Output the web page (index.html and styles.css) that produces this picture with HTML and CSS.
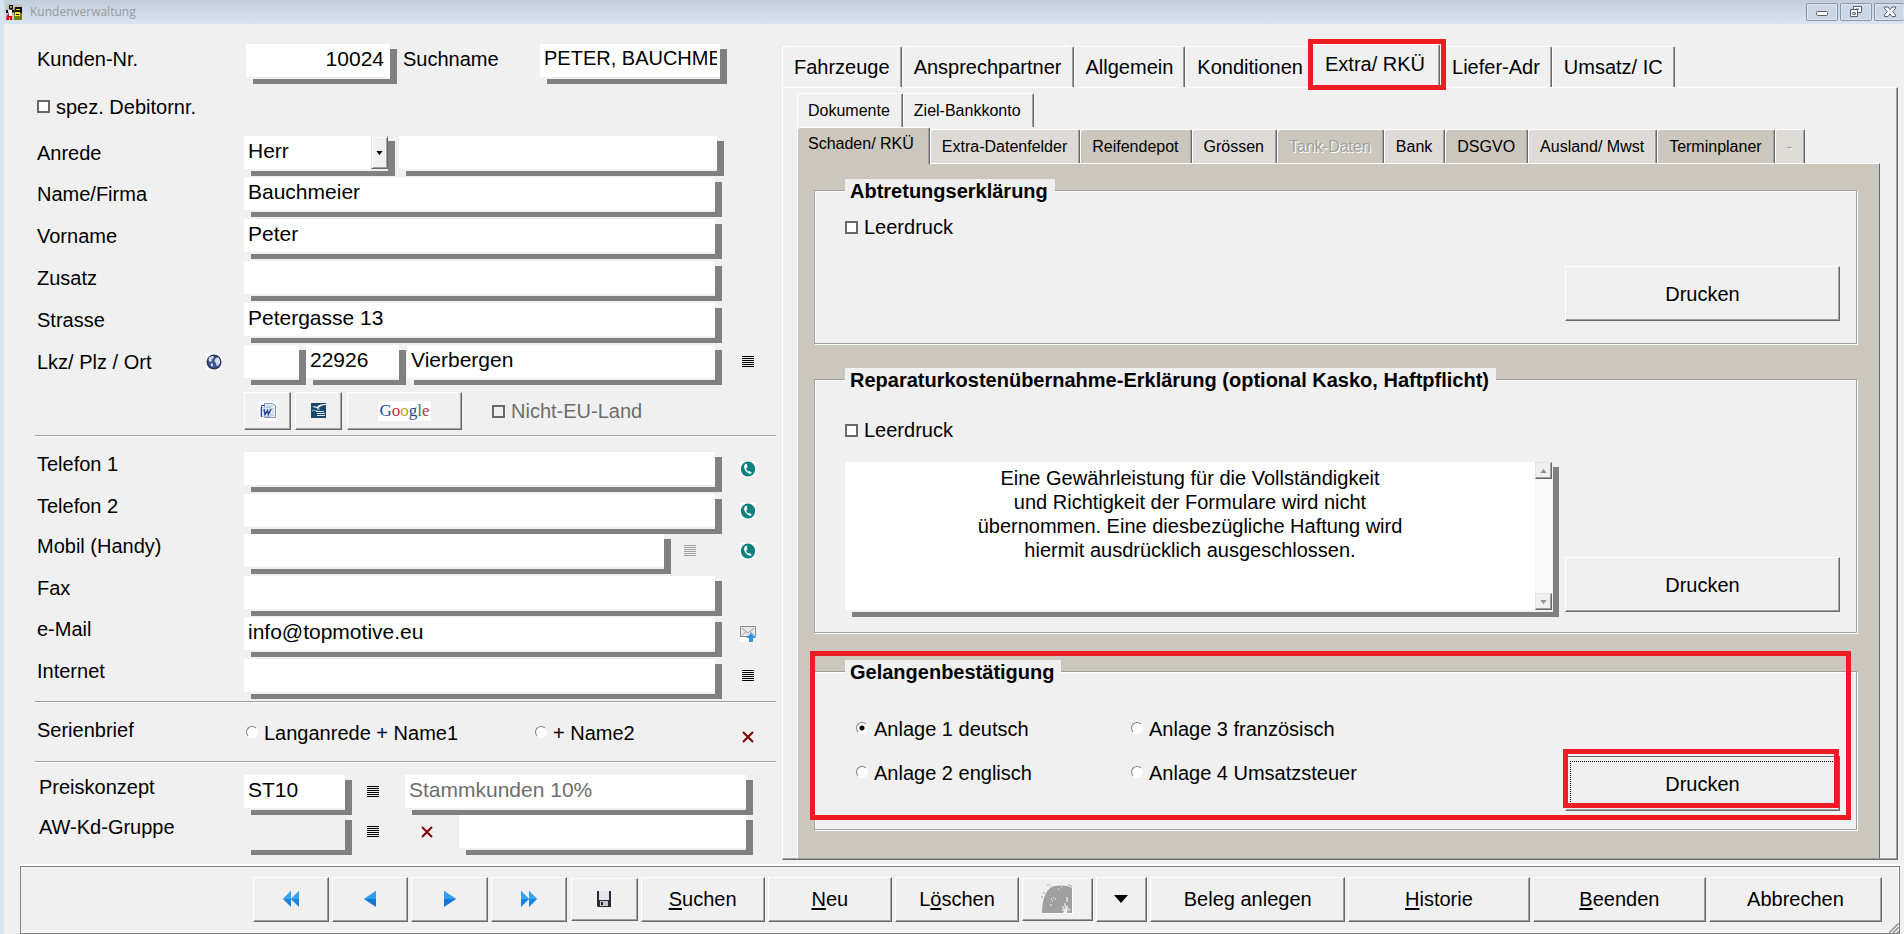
FILE: index.html
```html
<!DOCTYPE html>
<html lang="de">
<head>
<meta charset="utf-8">
<title>Kundenverwaltung</title>
<link rel="stylesheet" href="styles.css">
</head>
<body>
<svg class="defs" aria-hidden="true">
  <symbol id="i-list" viewBox="0 0 12 12"><path d="M0 0h12v1H0zM0 2h12v1H0zM0 4h12v1H0zM0 6h12v1H0zM0 8h12v1H0zM0 10h12v1H0z" fill="currentColor" shape-rendering="crispEdges"/></symbol>
  <symbol id="i-phone" viewBox="0 0 16 16"><rect width="16" height="16" fill="#fff"/><ellipse cx="8" cy="8" rx="7.200" ry="7.400" fill="#0b827f"/><path d="M5 3.200c-2 2.500-.5 7.500 4.500 9.600 1 .3 1.900-.3 2.200-1.200l-2.200-1.700-1.300.7C6.900 9.600 6.300 8.200 6.300 6.900l1.200-.7-.6-2.900c-.5-.6-1.400-.6-1.900-.1z" fill="#fff"/></symbol>
  <symbol id="i-x" viewBox="0 0 12 12"><path d="M1 1l10 10M11 1L1 11" stroke="#800000" stroke-width="2"/></symbol>
</svg>
<div class="window">
  <header class="titlebar">
    <svg class="app-icon" viewBox="0 0 16 16"><rect width="16" height="16" fill="#c4c4c4"/><path d="M8 9h8v7H8z" fill="#808000"/><path d="M9 3h7v6H8z" fill="#111"/><path d="M10 5h4v1h-4zM9 8h5v4H9z" fill="#ffea20"/><path d="M10 10h3v1h-3z" fill="#111"/><path d="M3 1h4v4H3z" fill="#111"/><path d="M4 2h2v2H4z" fill="#ada500"/><path d="M0 6h3l2-1 3 1v2L6 9v4H2V9H0z" fill="#111"/><path d="M2 6h4v6H3z" fill="#fff"/><path d="M1 11h2v5H0zM4 12h2v4H4z" fill="#e00000"/></svg>
    <h1>Kundenverwaltung</h1>
    <div class="win-buttons">
      <button aria-label="Minimieren"><svg viewBox="0 0 14 14"><rect x="1.500" y="6.500" width="11" height="4" rx="1" fill="#fff" stroke="#586070"/></svg></button>
      <button aria-label="Wiederherstellen"><svg viewBox="0 0 14 14" fill="#fff" stroke="#586070"><path d="M4.500 1.500h8v6h-8z"/><path d="M7 4h3"/><path d="M1.500 4.500h7v7h-7z"/><path d="M3.800 7.500h2.500v2H3.800z"/></svg></button>
      <button aria-label="Schließen"><svg viewBox="0 0 14 14"><path d="M1.500 2h3.500l2 2.400L9 2h3.500v1.500L9.700 6.500l2.800 3.500v1.500H9L7 9l-2 2.500H1.500V10l2.800-3.500L1.500 3.500z" fill="#fff" stroke="#586070"/></svg></button>
    </div>
  </header>

  <main class="content">
    <form class="customer">
      <div class="row gap-0">
        <label class="caption" for="nr">Kunden-Nr.</label>
        <input class="field w-nr" id="nr" value="10024">
        <label class="suchname" for="such">Suchname</label>
        <input class="field grow name-key" id="such" value="PETER, BAUCHMEIER">
        <span class="tail tail-s"></span>
      </div>
      <div class="row gap-l">
        <label class="check"><input type="checkbox">spez. Debitornr.</label>
      </div>
      <div class="row gap-l">
        <label class="caption" for="anrede">Anrede</label>
        <span class="combo"><select class="field" id="anrede"><option>Herr</option></select><span class="combo-arrow"><svg viewBox="0 0 8 5"><path d="M0 0h8L4 5z"/></svg></span></span>
        <input class="field grow" aria-label="Anredezusatz">
        <span class="tail tail-m"></span>
      </div>
      <div class="row gap-n">
        <label class="caption" for="name">Name/Firma</label>
        <input class="field grow" id="name" value="Bauchmeier"><span class="tail"></span>
      </div>
      <div class="row">
        <label class="caption" for="vorname">Vorname</label>
        <input class="field grow" id="vorname" value="Peter"><span class="tail"></span>
      </div>
      <div class="row">
        <label class="caption" for="zusatz">Zusatz</label>
        <input class="field grow" id="zusatz"><span class="tail"></span>
      </div>
      <div class="row">
        <label class="caption" for="strasse">Strasse</label>
        <input class="field grow" id="strasse" value="Petergasse 13"><span class="tail"></span>
      </div>
      <div class="row">
        <span class="caption split"><label for="ort">Lkz/ Plz / Ort</label>
          <svg class="icon16" viewBox="0 0 16 16"><rect width="16" height="16" fill="#fff"/><circle cx="8" cy="8" r="7.500" fill="#25335f"/><circle cx="8" cy="8" r="6" fill="#415591"/><path d="M3 3.500l3-1.500 2 .5-1 2-1.500 1L6 7l-2 1-1.500-2zM9 5l3-2 2 3 0 3-2 3-1.500-.5L10 9 8.500 7.500zM5 9l2 1-.5 3L5 12z" fill="#d5def0"/></svg></span>
        <input class="field w-lkz" aria-label="Lkz">
        <input class="field w-plz" aria-label="Plz" value="22926">
        <input class="field grow" id="ort" value="Vierbergen">
        <span class="tail"><svg class="icon12"><use href="#i-list"/></svg></span>
      </div>
      <div class="row tools">
        <span class="caption"></span>
        <button type="button" class="bevel t-sq" aria-label="Word"><svg viewBox="0 0 18 20"><rect width="18" height="20" fill="#fff"/><path d="M5.500 2.500h8l3 2v12h-11z" fill="#eef3fb" stroke="#7d93bd"/><path d="M7 5h7M12 8h3M13 11h2M9 14h6" stroke="#9fb2d6"/><path d="M1.500 6.500h10v9h-10z" fill="#dfe8f7" stroke="#b9c7e0"/><path d="M2.500 16V4.500h3" fill="none" stroke="#27488f"/><path d="M5 8l1 5.500 2.500-4 .8 4L12 8" fill="none" stroke="#27488f" stroke-width="1.500"/></svg></button>
        <button type="button" class="bevel t-sq" aria-label="Writer"><svg viewBox="0 0 18 20"><path d="M1 2h15v15H1z" fill="#1c4668"/><path d="M2 6c2-1 3-1 5 0 1-2 4-3 9-3v1c-4 0-6 1-8 4-1-1-3-2-6-2z" fill="#fff"/><path d="M2 10c2-1 3-1 4 0 1-1 2-2 4-2" fill="none" stroke="#9dc0da"/><path d="M6 10.500h8M7 12.500h8M7 14.500h8" stroke="#d8e6f0"/></svg></button>
        <button type="button" class="bevel t-google" aria-label="Google Maps"><span class="google"><b class="g1">G</b><b class="g2">o</b><b class="g3">o</b><b class="g1">g</b><b class="g4">l</b><b class="g2">e</b></span></button>
        <label class="check dim"><input type="checkbox">Nicht-EU-Land</label>
      </div>
      <hr>
      <div class="lower">
      <div class="row first">
        <label class="caption" for="tel1">Telefon 1</label>
        <input class="field grow" id="tel1"><span class="tail"><svg class="icon16"><use href="#i-phone"/></svg></span>
      </div>
      <div class="row">
        <label class="caption" for="tel2">Telefon 2</label>
        <input class="field grow" id="tel2"><span class="tail"><svg class="icon16"><use href="#i-phone"/></svg></span>
      </div>
      <div class="row gap-s">
        <label class="caption" for="mobil">Mobil (Handy)</label>
        <input class="field grow" id="mobil"><span class="mid"><svg class="icon12 faded"><use href="#i-list"/></svg></span><span class="tail tail-p"><svg class="icon16"><use href="#i-phone"/></svg></span>
      </div>
      <div class="row">
        <label class="caption" for="fax">Fax</label>
        <input class="field grow" id="fax"><span class="tail"></span>
      </div>
      <div class="row gap-n">
        <label class="caption" for="mail">e-Mail</label>
        <input class="field grow" id="mail" value="info@topmotive.eu"><span class="tail"><svg class="icon16" viewBox="0 0 16 16"><rect width="16" height="16" fill="#fff"/><path d="M.5.500h15v10H.5z" fill="#e8e8e8" stroke="#8a8a8a"/><path d="M2 2l6 5 6-5M2 9.500l4-4M14 9.500l-4-4" fill="none" stroke="#999"/><path d="M11 7l5 5h-3v4H9v-4H6z" fill="#2c93ee"/></svg></span>
      </div>
      <div class="row">
        <label class="caption" for="web">Internet</label>
        <input class="field grow" id="web"><span class="tail"><svg class="icon12"><use href="#i-list"/></svg></span>
      </div>
      </div>
      <hr class="after-fields">
      <div class="serien">
        <span class="caption">Serienbrief</span>
        <label class="radio r-first"><input type="radio" name="serie">Langanrede + Name1</label>
        <label class="radio"><input type="radio" name="serie">+ Name2</label>
        <span class="tail push"><svg class="icon12"><use href="#i-x"/></svg></span>
      </div>
      <hr>
      <div class="lower prices">
      <div class="row gap-m">
        <label class="caption" for="preis">Preiskonzept</label>
        <input class="field w-code" id="preis" value="ST10">
        <span class="pick"><svg class="icon12"><use href="#i-list"/></svg></span>
        <input class="field grow muted" aria-label="Preiskonzept Bezeichnung" value="Stammkunden 10%"><span class="tail tail-xs"></span>
      </div>
      <div class="row gap-s">
        <label class="caption" for="aw">AW-Kd-Gruppe</label>
        <input class="field w-code grey" id="aw">
        <span class="pick"><svg class="icon12"><use href="#i-list"/></svg></span>
        <span class="clear"><svg class="icon12"><use href="#i-x"/></svg></span>
        <input class="field grow" aria-label="AW-Kd-Gruppe Bezeichnung"><span class="tail tail-xs"></span>
      </div>
      </div>
    </form>

    <section class="details">
      <nav class="tabs">
        <button class="tab">Fahrzeuge</button><button class="tab">Ansprechpartner</button><button class="tab">Allgemein</button><button class="tab">Konditionen</button><button class="tab active overlap">Extra/ RKÜ<span class="mark mark-tab"></span></button><button class="tab">Liefer-Adr</button><button class="tab">Umsatz/ IC</button>
      </nav>
      <div class="panel">
        <nav class="tabs small">
          <button class="tab">Dokumente</button><button class="tab">Ziel-Bankkonto</button>
        </nav>
        <nav class="tabs small second">
          <button class="tab dark active">Schaden/ RKÜ</button><button class="tab light">Extra-Datenfelder</button><button class="tab dark">Reifendepot</button><button class="tab light">Grössen</button><button class="tab dark" disabled>Tank-Daten</button><button class="tab light">Bank</button><button class="tab dark">DSGVO</button><button class="tab light">Ausland/ Mwst</button><button class="tab dark">Terminplaner</button><button class="tab light" disabled>-</button>
        </nav>
        <div class="subpanel">
          <fieldset class="g1st">
            <legend>Abtretungserklärung</legend>
            <label class="check"><input type="checkbox">Leerdruck</label>
            <button class="bevel print">Drucken</button>
          </fieldset>
          <fieldset class="g2nd">
            <legend>Reparaturkostenübernahme-Erklärung (optional Kasko, Haftpflicht)</legend>
            <label class="check"><input type="checkbox">Leerdruck</label>
            <div class="memo-row">
              <div class="memo">
                <textarea aria-label="Hinweis">Eine Gewährleistung für die Vollständigkeit
und Richtigkeit der Formulare wird nicht
übernommen. Eine diesbezügliche Haftung wird
hiermit ausdrücklich ausgeschlossen.</textarea>
                <div class="scroll"><button class="bevel" aria-label="Nach oben"><svg viewBox="0 0 8 5"><path d="M0 5h8L4 0z"/></svg></button><button class="bevel" aria-label="Nach unten"><svg viewBox="0 0 8 5"><path d="M0 0h8L4 5z"/></svg></button></div>
              </div>
              <button class="bevel print">Drucken</button>
            </div>
          </fieldset>
          <fieldset class="g3rd">
            <legend>Gelangenbestätigung</legend>
            <div class="options">
              <label class="radio"><input type="radio" name="anlage" checked>Anlage 1 deutsch</label>
              <label class="radio"><input type="radio" name="anlage">Anlage 3 französisch</label>
              <label class="radio"><input type="radio" name="anlage">Anlage 2 englisch</label>
              <label class="radio"><input type="radio" name="anlage">Anlage 4 Umsatzsteuer</label>
            </div>
            <button class="bevel print focused">Drucken<span class="mark mark-print"></span></button>
            <span class="mark mark-group"></span>
          </fieldset>
        </div>
      </div>
    </section>
  </main>

  <footer class="toolbar">
    <button class="bevel b-nav" aria-label="Erster"><svg viewBox="0 0 18 18"><path d="M9 1v16L1 9zM17 1v16L9 9z" fill="#1583e0"/><path d="M9 1v8H1zM17 1v8H9z" fill="#38a4f2"/></svg></button>
    <button class="bevel b-nav" aria-label="Zurück"><svg viewBox="0 0 18 18"><path d="M15 1v16L3 9z" fill="#1178d8"/><path d="M15 1v8H3z" fill="#329ef0"/></svg></button>
    <button class="bevel b-nav" aria-label="Weiter"><svg viewBox="0 0 18 18"><path d="M3 1v16l12-8z" fill="#1178d8"/><path d="M3 1v8h12z" fill="#329ef0"/></svg></button>
    <button class="bevel b-nav" aria-label="Letzter"><svg viewBox="0 0 18 18"><path d="M1 1v16l8-8zM9 1v16l8-8z" fill="#1583e0"/><path d="M1 1v8h8zM9 1v8h8z" fill="#38a4f2"/></svg></button>
    <button class="bevel b-save" aria-label="Speichern"><svg viewBox="0 0 16 16"><path d="M1 0h14v16H2l-1-1z" fill="#2b2b35"/><path d="M3 0h10v9H3z" fill="#dfe6ec"/><path d="M4 10h8v5H4z" fill="#c9c9cd"/><path d="M5 11h2v3H5z" fill="#222"/></svg></button>
    <button class="bevel b-text"><span><u>S</u>uchen</span></button>
    <button class="bevel b-text"><span><u>N</u>eu</span></button>
    <button class="bevel b-text"><span>L<u>ö</u>schen</span></button>
    <button class="bevel b-pic" aria-label="Bild"><svg viewBox="0 0 32 30"><path d="M1 29C1 14 6 3 14 2c6-1 12-1 17 2v25h-5l1-8-4 4-1 4z" fill="#a0a0a0"/><path d="M6 1h2M9 2h1M27 1h3v3M1 12v3M3 8v2M25 16l2-3v3M28 15v9M24 22l-2 6M21 27h2M29 20v4" stroke="#a0a0a0" fill="none" stroke-dasharray="2 1"/><path d="M10 15h1M12 14h1M11 17h1M14 15h1M17 5h1M20 3h1M9 21h2M26 13v5M24 19v4M22 22v5M28 24v3" stroke="#fff"/><path d="M1 29.500h31M31.500 5v24" stroke="#fff"/></svg></button>
    <button class="bevel b-drop" aria-label="Auswahl"><svg viewBox="0 0 14 8"><path d="M0 0h14L7 8z"/></svg></button>
    <button class="bevel b-beleg">Beleg anlegen</button>
    <button class="bevel b-hist"><span><u>H</u>istorie</span></button>
    <button class="bevel b-end"><span><u>B</u>eenden</span></button>
    <button class="bevel b-end">Abbrechen</button>
    <svg class="grip" viewBox="0 0 10 10"><path d="M0 10L10 0M4 10l6-6M8 10l2-2" stroke="#909090" stroke-width="1.500"/></svg>
  </footer>
</div>
</body>
</html>
```
FILE: styles.css
```css
* { box-sizing: border-box; }
body {
  margin: 0;
  background: #f0f0f0;
  color: #000;
  font: 20px/24px "Liberation Sans", Arial, sans-serif;
}
button, input, select, textarea { font: inherit; color: inherit; margin: 0; }
.defs { position: absolute; width: 0; height: 0; }
.window {
  min-height: 100vh;
  display: flex;
  flex-direction: column;
  border-left: 4px solid #d7e4f2;
  overflow: hidden;
}

/* title bar */
.titlebar {
  display: flex;
  align-items: center;
  height: 24px;
  margin-left: -4px;
  padding-left: 6px;
  background: linear-gradient(#c1cfdc, #d8e5f3);
}
.app-icon { width: 16px; height: 16px; }
.titlebar h1 {
  margin: 0 0 0 8px;
  font: 12px/16px "Open Sans", "Noto Sans", sans-serif;
  color: #999;
}
.win-buttons { display: flex; gap: 2px; margin-left: auto; height: 18px; }
.win-buttons button {
  display: grid;
  place-items: center;
  width: 32px;
  padding: 0;
  border: 1px solid #8497b0;
  border-radius: 2px;
  background: #c9d7e6;
  box-shadow: inset 0 0 0 1px #dbe6f1;
}
.win-buttons button:last-child { width: 30px; border-right: 0; }
.win-buttons svg { width: 14px; height: 14px; }

.content {
  flex: 1;
  display: grid;
  grid-template-columns: minmax(0, 772fr) minmax(0, 1128fr);
}

/* customer form */
.customer { padding: 20px 0 0 31px; }
.row { display: flex; align-items: center; height: 33px; margin-top: 9px; }
.row.gap-0 { margin-top: 0; }
.row.gap-s { margin-top: 7px; }
.row.gap-n { margin-top: 8px; }
.row.gap-m { margin-top: 12px; }
.row.gap-l { margin-top: 13px; }
.row.first { margin-top: 15px; }
.caption { flex: none; width: 209px; padding-left: 2px; white-space: nowrap; }
.gap-0 label { padding-bottom: 4px; }
.lower .caption { padding-bottom: 10px; }
.prices .caption { padding-left: 4px; }
.split { display: flex; align-items: center; justify-content: space-between; padding-right: 22px; }
.field {
  min-width: 0;
  height: 33px;
  padding: 0 3px 4px 4px;
  border: 0;
  border-radius: 0;
  background: #fff;
  box-shadow: 0 2px #f0f0f0, 7px 7px #808080, 7px 5px #808080;
  font-size: 21px;
  appearance: none;
  outline: 0;
}
.grow { flex: 1; }
.name-key { font-size: 20px; }
.w-nr { width: 144px; margin-left: 2px; padding-right: 6px; text-align: right; }
.w-lkz { width: 55px; margin-right: 7px; }
.w-plz { width: 93px; margin-right: 8px; }
.w-code { width: 101px; }
.grey { background: #f0f0f0; }
.muted { color: #6d6d6d; }
.suchname { width: 150px; padding-left: 13px; }
.tail { flex: none; width: 61px; padding-left: 25px; line-height: 0; }
.tail:has(.icon12) { padding-left: 27px; }
.tail.tail-s { width: 56px; }
.tail.tail-m { width: 59px; }
.tail.tail-p { width: 61px; }
.tail.tail-xs { width: 30px; }
.mid { width: 51px; padding-left: 20px; line-height: 0; }
.pick { width: 60px; padding-left: 22px; line-height: 0; }
.clear { width: 54px; padding-left: 16px; line-height: 0; }
.icon12 { width: 12px; height: 12px; }
.icon16 { width: 16px; height: 16px; }
.faded { color: #a0a0a0; }
.combo { position: relative; width: 144px; margin-right: 11px; display: flex; }
.combo select { width: 100%; }
.combo-arrow {
  position: absolute;
  top: 0;
  right: 0;
  width: 17px;
  height: 33px;
  display: grid;
  place-items: center;
  background: #f0f0f0;
  border: 1px solid;
  border-color: #f0f0f0 #696969 #696969 #e0e0e0;
  box-shadow: inset 1px 1px #fff, inset -1px -1px #a0a0a0;
  pointer-events: none;
}
.combo-arrow svg { width: 7px; height: 4px; }

.check, .radio { display: inline-flex; align-items: center; white-space: nowrap; }
.check input {
  appearance: none;
  width: 13px;
  height: 13px;
  margin: 0 6px 0 0;
  border: 2px solid #696969;
  background: #fff;
}
.row > .check { padding-left: 2px; }
.row > .dim { color: #6d6d6d; padding-left: 30px; }
.dim input { background: #f0f0f0; }
.radio input {
  appearance: none;
  flex: none;
  width: 12px;
  height: 12px;
  margin: 0 6px 2px 0;
  border: 1px solid;
  border-color: #808080 #fff #fff #808080;
  border-radius: 50%;
  background: #fff;
}
.radio input:checked { background: radial-gradient(circle, #000 2px, #fff 3px); }

.bevel {
  display: grid;
  place-items: center;
  padding: 0;
  border: 1px solid;
  border-color: #fff #696969 #696969 #fff;
  border-radius: 0;
  background: #f0f0f0;
  box-shadow: inset -1px -1px #a0a0a0;
}
.row.tools { height: 38px; margin-top: 14px; }
.tools .bevel { height: 38px; }
.tools svg { width: 18px; height: 20px; }
.t-sq { width: 47px; margin-right: 4px; }
.t-google { width: 115px; margin-left: 1px; }
.google {
  padding: 0 1px;
  background: #fff;
  font: 17px/20px "Liberation Serif", serif;
}
.google b { font-weight: 400; }
.g1 { color: #1f4a9c; }
.g2 { color: #b8303a; }
.g3 { color: #c9a020; }
.g4 { color: #2f8a3f; }

hr {
  height: 2px;
  margin: 5px 0 0;
  border: 0;
  border-top: 1px solid #a0a0a0;
  background: #fff;
}
.after-fields { margin-top: 9px; }
.serien { display: flex; align-items: center; height: 58px; padding-top: 2px; }
.serien .caption { padding-bottom: 6px; }
.serien + hr { margin-top: 0; }
.r-first { width: 291px; padding-left: 2px; }
.push { margin-left: auto; padding-top: 8px; }

/* tabs */
.details { display: flex; flex-direction: column; padding: 20px 6px 4px 6px; }
.tabs { display: flex; align-items: flex-end; height: 43px; }
.tab {
  position: relative;
  height: 41px;
  padding: 0 11px;
  border: solid;
  border-width: 1px 1px 0;
  border-color: #fff #696969 #fff #fff;
  border-radius: 3px 2px 0 0;
  background: #f0f0f0;
  box-shadow: inset -1px 0 #a0a0a0;
  white-space: nowrap;
}
.tab.active { height: 43px; padding: 0 14px 4px; z-index: 1; }
.tab.overlap { margin-left: -5px; }
.panel {
  flex: 1;
  display: flex;
  flex-direction: column;
  padding: 5px 17px 0 14px;
  border: 1px solid;
  border-color: #fff #696969 #696969 #fff;
  box-shadow: inset -1px -1px #a0a0a0;
}
.small { height: 34px; font-size: 16px; }
.small .tab { height: 34px; padding: 0 12px 0 10px; }
.small.second { height: 36px; }
.small.second .tab { padding: 0 12px 0 11px; }
.small.second .active { height: 37px; margin-bottom: -1px; padding: 0 15px 4px 10px; }
.dark { background: #cbc7bc; }
.light { background: #dedbd6; }
.tab:disabled { color: #a0a0a0; text-shadow: 1px 1px #fff; }
.subpanel {
  flex: 1;
  padding: 15px 22px 27px 16px;
  background: #cbc7bc;
  border: 1px solid;
  border-color: #fff #696969 #a0a0a0 #fff;
}

fieldset {
  position: relative;
  min-width: 0;
  margin: 0;
  padding: 0 16px 0 30px;
  border: 1px solid #a0a0a0;
  background: #f0f0f0;
  box-shadow: 1px 1px #fff, inset 1px 1px #fff;
}
legend { height: 22px; padding: 0 7px 0 5px; font-weight: 700; background: #f0f0f0; }
fieldset > .check { display: flex; }
.print { flex: none; width: 275px; height: 55px; }
.g1st { height: 165px; padding-top: 14px; }
.g1st .print { margin: 27px 0 0 auto; }
.g2nd { height: 265px; margin-top: 24px; padding-top: 28px; }
.memo-row { display: flex; align-items: flex-end; gap: 13px; margin-top: 20px; }
.memo {
  flex: 1;
  min-width: 0;
  display: flex;
  height: 148px;
  margin-bottom: 2px;
  background: #fff;
  box-shadow: 1px 2px #f0f0f0, 7px 7px #808080, 7px 5px #808080;
}
.memo textarea {
  flex: 1;
  min-width: 0;
  padding: 4px 0 0;
  border: 0;
  background: none;
  resize: none;
  overflow: hidden;
  text-align: center;
  outline: 0;
}
.scroll { width: 17px; display: flex; flex-direction: column; justify-content: space-between; background: #f8f8f8; }
.scroll .bevel { width: 17px; height: 17px; border-color: #e3e3e3 #696969 #696969 #e3e3e3; }
.scroll svg { width: 7px; height: 4px; fill: #909090; }
.g3rd { height: 170px; margin-top: 27px; padding-top: 35px; display: flex; justify-content: space-between; }
.options { display: grid; grid-template-columns: 275px auto; grid-auto-rows: 24px; row-gap: 20px; padding-left: 11px; }
.g3rd .print { position: relative; margin-top: 39px; border-top-color: #696969; }
.focused::before { content: ""; position: absolute; inset: 4px; border: 1px dotted #000; }

/* red highlight frames */
.mark { position: absolute; border: 5px solid #ed1c24; pointer-events: none; }
.mark-tab { inset: -6px -7px -3px -3px; }
.mark-print { inset: -8px 0 2px -3px; }
.mark-group { inset: -31px 5px 9px -5px; }

/* bottom bar */
.toolbar {
  position: relative;
  display: flex;
  align-items: center;
  gap: 3px;
  height: 68px;
  margin: 2px 4px 0 16px;
  padding: 0 17px 2px 12.2%;
  border: 1px solid #808080;
  box-shadow: 0 -2px #fff, inset -1px -1px #fff;
}
.toolbar .bevel { height: 45px; min-width: 0; }
.b-nav { flex: 76 1 0; }
.toolbar .b-save { flex: 66 1 0; height: 43px; margin-left: 1px; }
.b-text { flex: 125 1 0; }
.toolbar .b-pic { flex: 70 1 0; height: 43px; }
.b-drop { flex: 51 1 0; }
.b-beleg { flex: 197 1 0; }
.b-hist { flex: 184 1 0; }
.b-end { flex: 175 1 0; }
.toolbar u { text-underline-offset: 2px; }
.b-nav svg { width: 18px; height: 18px; }
.b-save svg { width: 16px; height: 16px; }
.b-pic svg { width: 32px; height: 30px; }
.b-drop svg { width: 14px; height: 8px; }
.grip { position: absolute; right: 0; bottom: 0; width: 10px; height: 10px; }
```
